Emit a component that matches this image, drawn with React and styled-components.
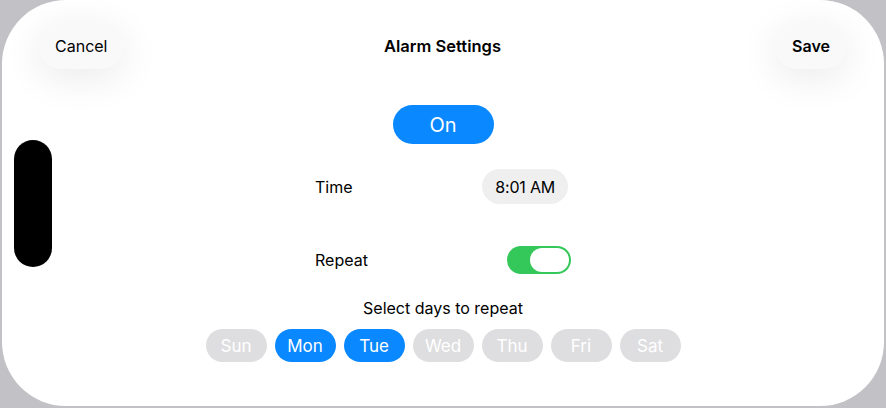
import React, { useState } from 'react';
import styled, { createGlobalStyle } from 'styled-components';

const GlobalStyle = createGlobalStyle`
  html, body {
    margin: 0;
    padding: 0;
    background: #c1c1c6;
  }
  body {
    font-family: Inter, "Liberation Sans", sans-serif;
    -webkit-font-smoothing: antialiased;
  }
`;

const Frame = styled.div`
  position: relative;
  box-sizing: border-box;
  margin: 0 2px;
  height: 406px;
  background: #fff;
  border-radius: 64px;
  display: flex;
  flex-direction: column;
`;

const Island = styled.div`
  position: absolute;
  left: 12px;
  top: 140px;
  width: 38px;
  height: 127px;
  border-radius: 19px;
  background: #000;
`;

const Header = styled.header`
  display: grid;
  grid-template-columns: 1fr auto 1fr;
  align-items: center;
  padding: 23px 37px 0 36px;
`;

const PillButton = styled.button`
  justify-self: ${(p) => (p.$end ? 'end' : 'start')};
  height: 46px;
  padding: 0 17px;
  border: none;
  border-radius: 23px;
  background: #f9f9f9;
  box-shadow: 0 8px 40px rgba(0, 0, 0, 0.09);
  font-family: inherit;
  font-size: 16px;
  font-weight: ${(p) => (p.$bold ? 600 : 400)};
  color: #000;
  cursor: pointer;
`;

const Title = styled.h1`
  margin: 0;
  font-size: 16.5px;
  font-weight: 600;
  color: #000;
`;

const Main = styled.main`
  display: flex;
  flex-direction: column;
  align-items: center;
`;

const OnButton = styled.button`
  margin-top: 36px;
  width: 101px;
  height: 39px;
  border: none;
  border-radius: 20px;
  background: #0a88ff;
  color: #fff;
  font-family: inherit;
  font-size: 20px;
  font-weight: 400;
`;

const Row = styled.div`
  box-sizing: border-box;
  width: 256px;
  margin-top: ${(p) => p.$top}px;
  display: flex;
  align-items: center;
  justify-content: space-between;
`;

const Label = styled.span`
  font-size: 16px;
  color: #000;
`;

const TimePill = styled.span`
  display: inline-flex;
  align-items: center;
  height: 35px;
  padding: 0 13px;
  margin-right: 3px;
  border-radius: 18px;
  background: #efeff0;
  font-size: 16px;
  letter-spacing: -0.2px;
  color: #000;
`;

const Switch = styled.button`
  position: relative;
  width: 64px;
  height: 28px;
  padding: 0;
  border: none;
  border-radius: 14px;
  background: ${(p) => (p.$on ? '#34c759' : '#e5e5ea')};
  cursor: pointer;
`;

const Knob = styled.span`
  position: absolute;
  top: 2px;
  left: ${(p) => (p.$on ? '23px' : '2px')};
  width: 39px;
  height: 24px;
  border-radius: 12px;
  background: #fff;
`;

const Hint = styled.p`
  margin: 24px 0 0;
  font-size: 16px;
  line-height: 20px;
  color: #000;
`;

const Days = styled.div`
  margin-top: 11px;
  display: flex;
  gap: 8px;
`;

const Day = styled.button`
  width: 61px;
  height: 33px;
  padding: 0;
  border: none;
  border-radius: 17px;
  background: ${(p) => (p.$active ? '#0a88ff' : '#dedee0')};
  color: #fff;
  font-family: inherit;
  font-size: 17px;
  cursor: pointer;
`;

const DAYS = ['Sun', 'Mon', 'Tue', 'Wed', 'Thu', 'Fri', 'Sat'];

export default function App() {
  const [repeat, setRepeat] = useState(true);
  const [selected, setSelected] = useState(['Mon', 'Tue']);

  const toggleDay = (d) => {
    setSelected(selected.includes(d) ? selected.filter((x) => x !== d) : [...selected, d]);
  };

  return (
    <>
      <GlobalStyle />
      <Frame>
        <Island />
        <Header>
          <PillButton>Cancel</PillButton>
          <Title>Alarm Settings</Title>
          <PillButton $end $bold>
            Save
          </PillButton>
        </Header>
        <Main>
          <OnButton>On</OnButton>
          <Row $top={25}>
            <Label>Time</Label>
            <TimePill>8:01 AM</TimePill>
          </Row>
          <Row $top={42}>
            <Label>Repeat</Label>
            <Switch $on={repeat} onClick={() => setRepeat(!repeat)}>
              <Knob $on={repeat} />
            </Switch>
          </Row>
          <Hint>Select days to repeat</Hint>
          <Days>
            {DAYS.map((d) => (
              <Day key={d} $active={selected.includes(d)} onClick={() => toggleDay(d)}>
                {d}
              </Day>
            ))}
          </Days>
        </Main>
      </Frame>
    </>
  );
}
